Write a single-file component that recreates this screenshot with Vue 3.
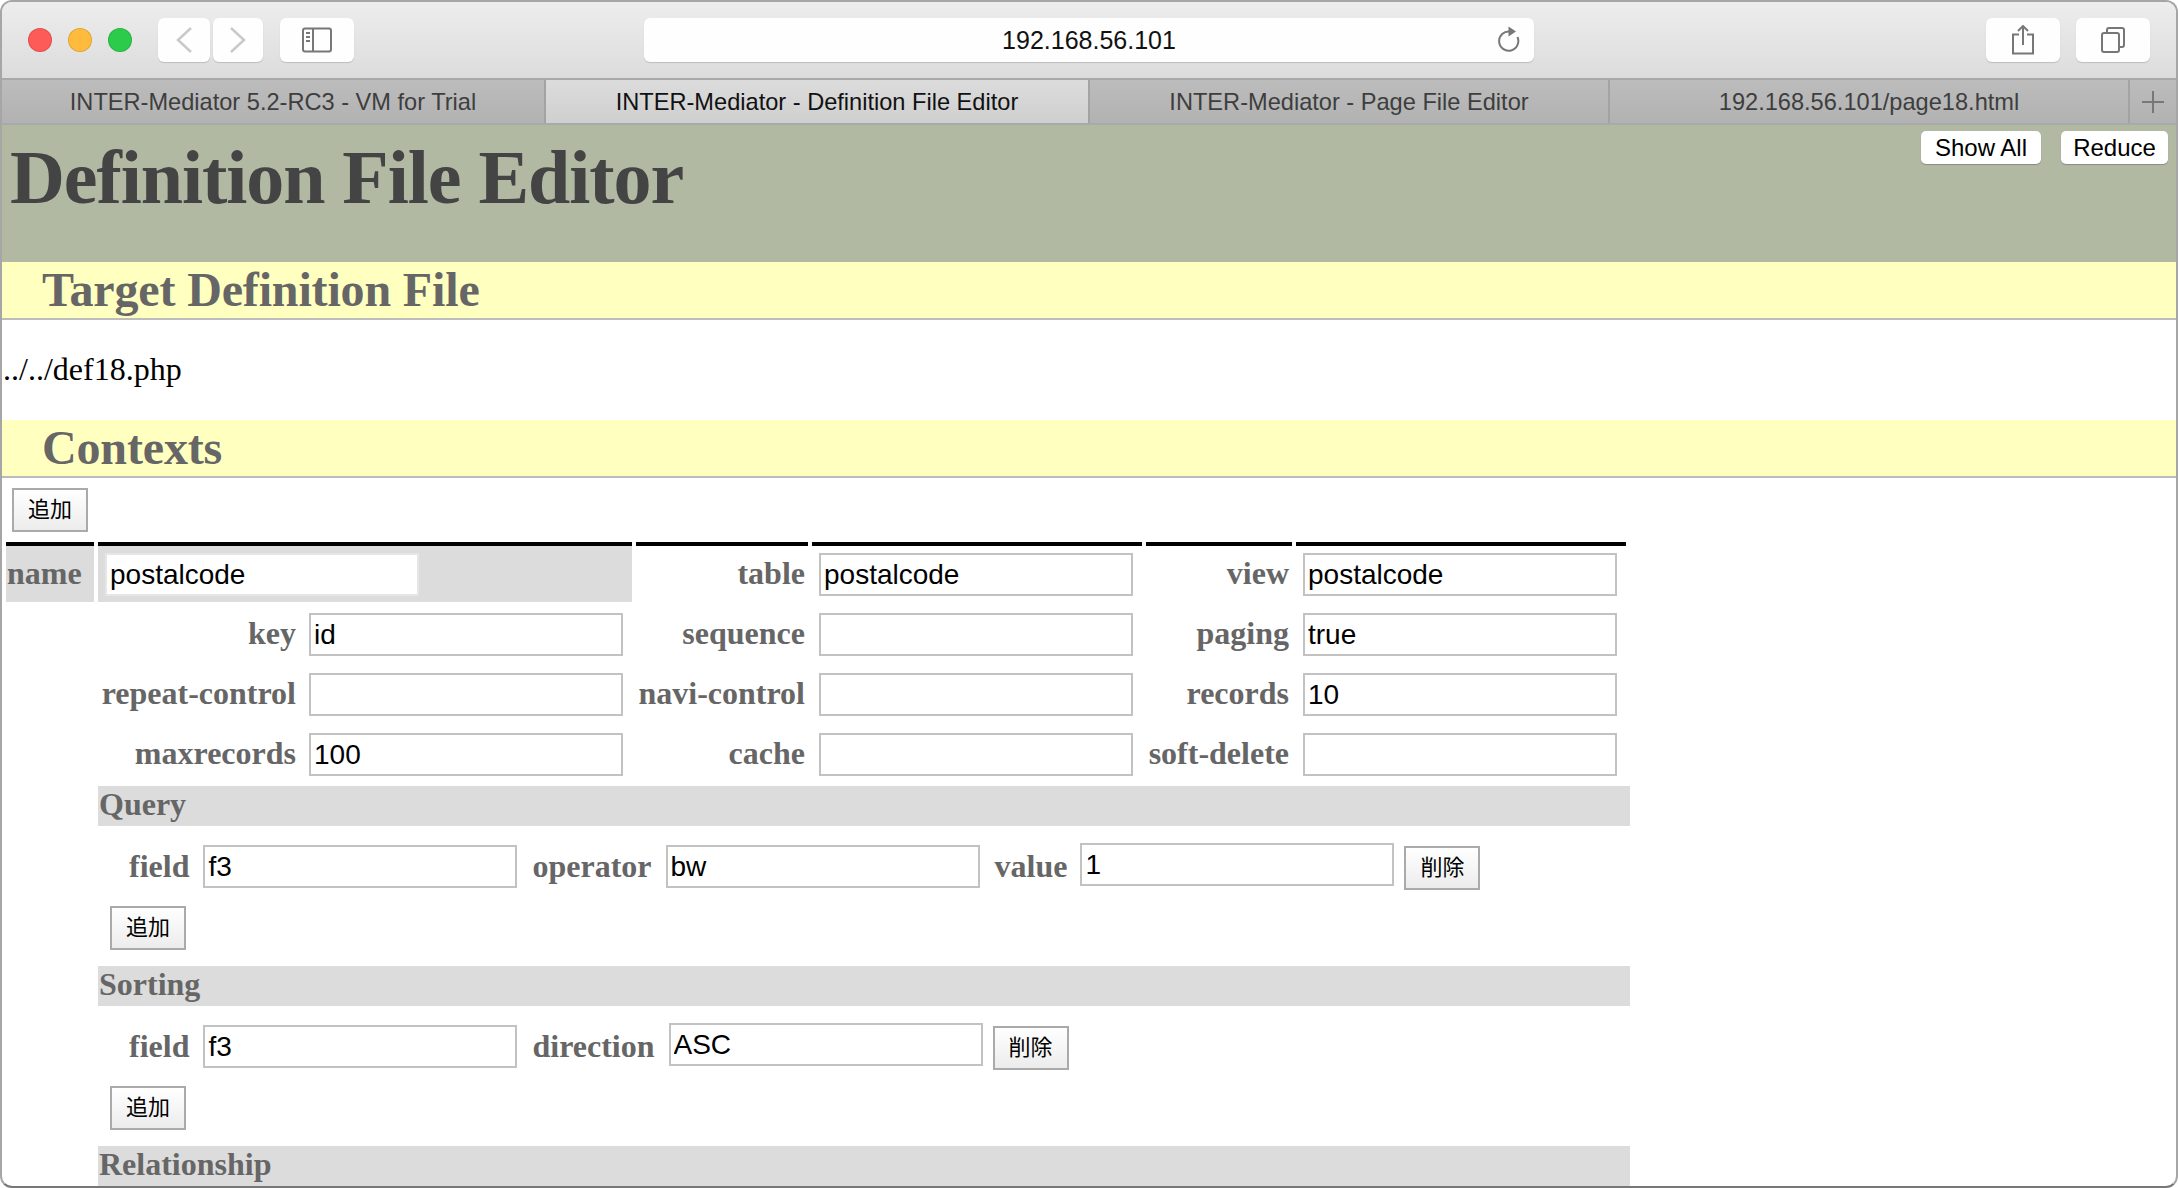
<script setup>
const tabs = [
  { title: "INTER-Mediator 5.2-RC3 - VM for Trial", width: 544 },
  { title: "INTER-Mediator - Definition File Editor", width: 544, active: true },
  { title: "INTER-Mediator - Page File Editor", width: 520 },
  { title: "192.168.56.101/page18.html", width: 520 },
];

const rows = [
  [["key", "id"], ["sequence", ""], ["paging", "true"]],
  [["repeat-control", ""], ["navi-control", ""], ["records", "10"]],
  [["maxrecords", "100"], ["cache", ""], ["soft-delete", ""]],
];
</script>

<template>
  <div class="window">
    <!-- Safari toolbar -->
    <header class="toolbar">
      <div class="lights">
        <span class="light light--red"></span>
        <span class="light light--yellow"></span>
        <span class="light light--green"></span>
      </div>
      <div class="nav">
        <button class="tool tool--back">
          <svg width="18" height="26" viewBox="0 0 18 26"><path d="M16 1 3 13l13 12" /></svg>
        </button>
        <button class="tool tool--forward">
          <svg width="18" height="26" viewBox="0 0 18 26"><path d="M2 1l13 12L2 25" /></svg>
        </button>
      </div>
      <button class="tool tool--sidebar">
        <svg width="30" height="26" viewBox="0 0 30 26" class="dark">
          <rect x="1" y="1.5" width="28" height="23" rx="2" />
          <path d="M11 1.5v23M4 6h4M4 10h4M4 14h4" />
        </svg>
      </button>
      <div class="address">
        <span class="address__text">192.168.56.101</span>
        <svg class="address__reload dark" width="24" height="26" viewBox="0 0 24 26">
          <path d="M14 5.6A9.6 9.6 0 1 0 21.4 11" />
          <path class="fill" d="M12.5 0.5 20 5.6 12.5 10.5z" />
        </svg>
      </div>
      <button class="tool tool--share">
        <svg width="24" height="30" viewBox="0 0 24 30" class="dark">
          <path d="M8 9.5H2v19h20v-19h-6M12 1v19M7 6l5-5 5 5" />
        </svg>
      </button>
      <button class="tool tool--tabs">
        <svg width="26" height="26" viewBox="0 0 26 26" class="dark">
          <path d="M7 6V3a2 2 0 0 1 2-2h13a2 2 0 0 1 2 2v15a2 2 0 0 1-2 2h-3" />
          <rect x="2" y="6" width="17" height="19" rx="2" />
        </svg>
      </button>
    </header>

    <!-- Tab bar -->
    <nav class="tabs">
      <div
        v-for="tab in tabs"
        :key="tab.title"
        class="tab"
        :class="{ 'tab--active': tab.active }"
        :style="{ width: tab.width + 'px' }"
      >
        {{ tab.title }}
      </div>
      <div class="tab tab--plus">
        <svg width="24" height="24" viewBox="0 0 24 24"><path d="M12 1v22M1 12h22" /></svg>
      </div>
    </nav>

    <div class="page">
      <div class="page__head">
        <h1>Definition File Editor</h1>
        <div class="page__actions">
          <button class="pill pill--show">Show All</button>
          <button class="pill pill--reduce">Reduce</button>
        </div>
      </div>

      <h2>Target Definition File</h2>
      <p class="filename">../../def18.php</p>

      <h2>Contexts</h2>
      <button class="btn btn--first">追加</button>

      <div class="ctx">
        <label class="cell-top cell-top--name">name</label>
        <div class="cell-top cell-top--grey cell-top--wide">
          <input class="field field--name" value="postalcode" />
        </div>
        <label class="cell-top">table</label>
        <div class="cell-top cell-top--input"><input class="field" value="postalcode" /></div>
        <label class="cell-top">view</label>
        <div class="cell-top cell-top--input"><input class="field" value="postalcode" /></div>

        <template v-for="(row, i) in rows" :key="i">
          <template v-for="(item, j) in row" :key="item[0]">
            <label class="cell cell--label" :class="{ 'cell--first': j === 0 }">{{ item[0] }}</label>
            <div class="cell"><input class="field" :value="item[1]" /></div>
          </template>
        </template>

        <div class="sub">
          <h3>Query</h3>
          <div class="sub__row">
            <label class="sub__label sub__label--first">field</label>
            <input class="field" value="f3" />
            <label class="sub__label">operator</label>
            <input class="field" value="bw" />
            <label class="sub__label sub__label--value">value</label>
            <input class="field field--raised" value="1" />
            <button class="btn btn--delete">削除</button>
          </div>
          <button class="btn">追加</button>

          <h3>Sorting</h3>
          <div class="sub__row">
            <label class="sub__label sub__label--first">field</label>
            <input class="field" value="f3" />
            <label class="sub__label">direction</label>
            <input class="field field--raised" value="ASC" />
            <button class="btn btn--delete">削除</button>
          </div>
          <button class="btn">追加</button>

          <h3>Relationship</h3>
        </div>
      </div>
    </div>
  </div>
</template>

<style>
html,
body {
  margin: 0;
  background: #fff;
  overflow: hidden;
}
</style>

<style scoped>
.window {
  box-sizing: border-box;
  width: 2178px;
  height: 1188px;
  overflow: hidden;
  background: #fff;
  border: 2px solid #a6a6a6;
  border-bottom-color: #777;
  border-radius: 12px 12px 12px 12px;
  font-family: "Liberation Sans", Arial, sans-serif;
}

/* ── Toolbar ── */
.toolbar {
  display: flex;
  align-items: center;
  box-sizing: border-box;
  height: 76px;
  background: linear-gradient(#ededed, #dcdcdc);
}

.lights {
  display: flex;
  gap: 16px;
  margin-left: 26px;
}

.light {
  width: 24px;
  height: 24px;
  box-sizing: border-box;
  border-radius: 50%;
  border: 1px solid rgba(0, 0, 0, 0.12);
}

.light--red { background: #fc5b57; }
.light--yellow { background: #ffbb3b; }
.light--green { background: #2ccb4b; }

.nav {
  display: flex;
  gap: 3px;
  margin-left: 26px;
}

.tool {
  display: flex;
  align-items: center;
  justify-content: center;
  height: 44px;
  padding: 0;
  border: 0;
  border-radius: 6px;
  background: #fefefe;
  box-shadow: 0 1px 1px #bdbdbd;
}

.tool svg {
  fill: none;
  stroke: #c9c9c9;
  stroke-width: 2.5;
}

.tool svg.dark,
.address svg.dark {
  stroke: #777;
  stroke-width: 2;
  fill: none;
}

.tool--back { width: 52px; }
.tool--forward { width: 50px; }
.tool--sidebar { width: 74px; margin-left: 17px; }
.tool--share { width: 74px; margin-left: 452px; }
.tool--tabs { width: 74px; margin-left: 16px; }

.address {
  position: relative;
  display: flex;
  align-items: center;
  justify-content: center;
  box-sizing: border-box;
  width: 890px;
  height: 44px;
  margin-left: 290px;
  border-radius: 6px;
  background: #fefefe;
  box-shadow: 0 1px 1px #bdbdbd;
}

.address__text {
  font-size: 25px;
  color: #111;
}

.address__reload {
  position: absolute;
  right: 14px;
  top: 8px;
}

.address svg.dark .fill {
  fill: #777;
  stroke: none;
}

/* ── Tabs ── */
.tabs {
  display: flex;
  box-sizing: border-box;
  height: 47px;
  border-top: 2px solid #a9a9a9;
  border-bottom: 2px solid #a9a9a9;
}

.tab {
  display: flex;
  align-items: center;
  justify-content: center;
  box-sizing: border-box;
  padding-top: 1px;
  border-right: 2px solid #a3a3a3;
  background: linear-gradient(#bcbcbc, #b2b2b2);
  color: #3e3e3e;
  font-size: 23.6px;
}

.tab--active {
  background: linear-gradient(#dcdcdc, #cfcfcf);
  color: #111;
}

.tab--plus {
  flex: 1;
  border-right: 0;
}

.tab--plus svg {
  fill: none;
  stroke: #777;
  stroke-width: 2;
}

/* ── Page ── */
.page {
  font-family: "Liberation Serif", "Times New Roman", serif;
}

.page__head {
  display: flex;
  justify-content: space-between;
  box-sizing: border-box;
  height: 137px;
  padding: 6px 8px 0 8px;
  background: #b1b9a3;
}

h1 {
  margin: 0;
  padding-top: 1px;
  font-size: 76px;
  line-height: 90px;
  letter-spacing: -1.07px;
  color: #444;
}

.page__actions {
  display: flex;
  gap: 20px;
}

.pill {
  height: 33px;
  padding: 1px 0 0;
  border: 0;
  border-radius: 5px;
  background: #fff;
  box-shadow: 0 1px 1px #8a8a8a;
  color: #000;
  font-family: "Liberation Sans", Arial, sans-serif;
  font-size: 24px;
}

.pill--show { width: 120px; }
.pill--reduce { width: 107px; }

h2 {
  box-sizing: border-box;
  height: 58px;
  margin: 0;
  padding-left: 40px;
  border-bottom: 2px solid #bcbcbc;
  background: #ffffc0;
  color: #666;
  font-size: 48px;
  line-height: 56px;
  letter-spacing: -0.15px;
}

.filename {
  margin: 0;
  height: 100px;
  padding-left: 1px;
  color: #000;
  font-size: 32px;
  line-height: 98px;
}

/* ── Buttons ── */
.btn {
  display: block;
  box-sizing: border-box;
  width: 76px;
  height: 44px;
  padding: 0 0 6px;
  border: 2px solid #aaa;
  background: linear-gradient(#fff, #ececec);
  color: #000;
  font-family: "Noto Sans CJK JP", sans-serif;
  font-size: 22px;
}

.btn--first {
  margin: 10px 0 10px 10px;
}

.btn--delete {
  margin: 2px 0 0 10px;
}

/* ── Context grid ── */
.ctx {
  display: grid;
  grid-template-columns: 88px 202px 328px 172px 330px 146px 330px;
  column-gap: 4px;
  padding-left: 4px;
  color: #666;
  font-size: 32px;
  font-weight: bold;
  white-space: nowrap;
}

.cell-top,
.cell {
  display: flex;
  align-items: center;
  justify-content: flex-end;
  box-sizing: border-box;
}

.cell-top {
  height: 60px;
  padding: 0 3px 2px 0;
  border-top: 4px solid #000;
}

.cell-top--input {
  padding: 0 9px 0 0;
}

.cell-top--name {
  justify-content: flex-start;
  padding-left: 1px;
  background: #dcdcdc;
}

.cell-top--wide {
  grid-column: span 2;
  justify-content: flex-start;
  padding: 0 0 0 7px;
  background: #dcdcdc;
}

.cell {
  height: 60px;
  padding: 5px 9px 0 0;
}

.cell--label {
  padding-right: 3px;
  padding-top: 3px;
}

.cell--first {
  grid-column: 2;
  padding-right: 4px;
}

.field {
  box-sizing: border-box;
  flex: none;
  width: 314px;
  height: 43px;
  padding: 1px 3px 0;
  border: 2px solid #c2c2c2;
  border-radius: 0;
  outline: 0;
  background: #fff;
  color: #000;
  font-family: "Liberation Sans", Arial, sans-serif;
  font-size: 28px;
}

.field--name {
  border-color: #e6e6e6;
}

.field--raised {
  margin-top: -4px;
}

/* ── Sub sections ── */
.sub {
  grid-column: 2 / -1;
  margin-right: -4px;
  padding-top: 4px;
}

h3 {
  height: 40px;
  margin: 0;
  padding-left: 1px;
  background: #dcdcdc;
  color: #666;
  font-size: 32px;
  line-height: 36px;
}

.sub > .btn {
  margin: 18px 0 16px 12px;
}

.sub__row {
  display: flex;
  align-items: center;
  margin-top: 19px;
  height: 43px;
}

.sub__label {
  margin: 0 14px 0 15px;
}

.sub__label--first {
  margin-left: 31px;
}

.sub__label--value {
  margin-right: 13px;
}
</style>
